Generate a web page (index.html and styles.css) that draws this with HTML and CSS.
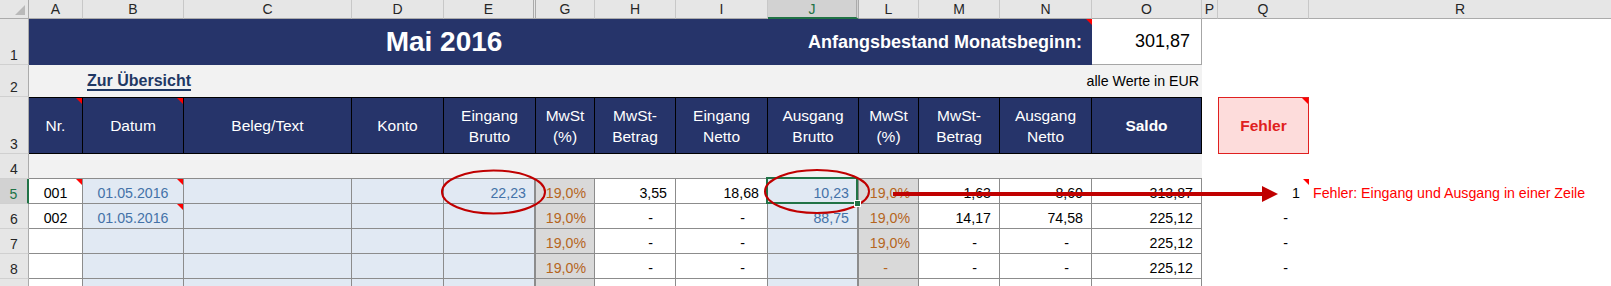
FILE: index.html
```html
<!DOCTYPE html>
<html lang="de">
<head>
<meta charset="utf-8">
<title>Mai 2016</title>
<link rel="stylesheet" href="styles.css">
</head>
<body>
<div class="sheet">
  <div class="grid">
    <!-- column headers -->
    <div class="ch corner"></div>
    <div class="ch">A</div>
    <div class="ch">B</div>
    <div class="ch">C</div>
    <div class="ch">D</div>
    <div class="ch hid">E</div>
    <div class="ch">G</div>
    <div class="ch">H</div>
    <div class="ch">I</div>
    <div class="ch hid sel">J</div>
    <div class="ch">L</div>
    <div class="ch">M</div>
    <div class="ch">N</div>
    <div class="ch">O</div>
    <div class="ch">P</div>
    <div class="ch">Q</div>
    <div class="ch last">R</div>

    <!-- row 1 -->
    <div class="rh">1</div>
    <div class="navy span3"></div>
    <div class="navy t-month">Mai 2016</div>
    <div class="navy t-label cm">Anfangsbestand Monatsbeginn:</div>
    <div class="start">301,87</div>
    <div class="blank span3"></div>

    <!-- row 2 -->
    <div class="rh">2</div>
    <div class="band"></div>
    <div class="band r2"><span class="link">Zur Übersicht</span><span class="unit">alle Werte in EUR</span></div>
    <div class="blank span3"></div>

    <!-- row 3 -->
    <div class="rh">3</div>
    <div class="h cm">Nr.</div>
    <div class="h cm">Datum</div>
    <div class="h">Beleg/Text</div>
    <div class="h">Konto</div>
    <div class="h">Eingang<br>Brutto</div>
    <div class="h">MwSt<br>(%)</div>
    <div class="h">MwSt-<br>Betrag</div>
    <div class="h">Eingang<br>Netto</div>
    <div class="h">Ausgang<br>Brutto</div>
    <div class="h">MwSt<br>(%)</div>
    <div class="h">MwSt-<br>Betrag</div>
    <div class="h">Ausgang<br>Netto</div>
    <div class="h b">Saldo</div>
    <div class="blank"></div>
    <div class="err cm">Fehler</div>
    <div class="blank"></div>

    <!-- row 4 -->
    <div class="rh">4</div>
    <div class="r4"></div>
    <div class="blank span3"></div>

    <!-- row 5 -->
    <div class="rh sel">5</div>
    <div class="d c cm">001</div>
    <div class="d c in cm">01.05.2016</div>
    <div class="d in"></div>
    <div class="d in"></div>
    <div class="d in dbl">22,23</div>
    <div class="d pct">19,0%</div>
    <div class="d">3,55</div>
    <div class="d">18,68</div>
    <div class="d in dbl cur">10,23<span class="handle"></span></div>
    <div class="d pct">19,0%</div>
    <div class="d">1,63</div>
    <div class="d">8,60</div>
    <div class="d">313,87</div>
    <div class="w"></div>
    <div class="w num cm">1</div>
    <div class="w msg">Fehler: Eingang und Ausgang in einer Zeile</div>

    <!-- row 6 -->
    <div class="rh">6</div>
    <div class="d c">002</div>
    <div class="d c in cm">01.05.2016</div>
    <div class="d in"></div>
    <div class="d in"></div>
    <div class="d in dbl"></div>
    <div class="d pct">19,0%</div>
    <div class="d dash">-</div>
    <div class="d dash">-</div>
    <div class="d in dbl">88,75</div>
    <div class="d pct">19,0%</div>
    <div class="d">14,17</div>
    <div class="d">74,58</div>
    <div class="d">225,12</div>
    <div class="w"></div>
    <div class="w num dash">-</div>
    <div class="w"></div>

    <!-- row 7 -->
    <div class="rh">7</div>
    <div class="d c"></div>
    <div class="d in"></div>
    <div class="d in"></div>
    <div class="d in"></div>
    <div class="d in dbl"></div>
    <div class="d pct">19,0%</div>
    <div class="d dash">-</div>
    <div class="d dash">-</div>
    <div class="d in dbl"></div>
    <div class="d pct">19,0%</div>
    <div class="d dash">-</div>
    <div class="d dash">-</div>
    <div class="d">225,12</div>
    <div class="w"></div>
    <div class="w num dash">-</div>
    <div class="w"></div>

    <!-- row 8 -->
    <div class="rh">8</div>
    <div class="d c"></div>
    <div class="d in"></div>
    <div class="d in"></div>
    <div class="d in"></div>
    <div class="d in dbl"></div>
    <div class="d pct">19,0%</div>
    <div class="d dash">-</div>
    <div class="d dash">-</div>
    <div class="d in dbl"></div>
    <div class="d pct dash2">-</div>
    <div class="d dash">-</div>
    <div class="d dash">-</div>
    <div class="d">225,12</div>
    <div class="w"></div>
    <div class="w num dash">-</div>
    <div class="w"></div>

    <!-- row 9 (only its top edge is visible) -->
    <div class="rh"></div>
    <div class="d c"></div>
    <div class="d in"></div>
    <div class="d in"></div>
    <div class="d in"></div>
    <div class="d in dbl"></div>
    <div class="d pct"></div>
    <div class="d"></div>
    <div class="d"></div>
    <div class="d in dbl"></div>
    <div class="d pct"></div>
    <div class="d"></div>
    <div class="d"></div>
    <div class="d"></div>
    <div class="w"></div>
    <div class="w"></div>
    <div class="w"></div>
  </div>

  <svg class="marks" width="1611" height="286" viewBox="0 0 1611 286" aria-hidden="true">
    <ellipse cx="493.5" cy="192" rx="51.5" ry="21.5" fill="none" stroke="#c00000" stroke-width="2"/>
    <ellipse cx="817" cy="191.5" rx="52" ry="21.5" fill="none" stroke="#c00000" stroke-width="2"/>
    <line x1="893" y1="194" x2="1264" y2="194" stroke="#c00000" stroke-width="4"/>
    <polygon points="1262,186 1278,194 1262,202" fill="#c00000"/>
  </svg>
</div>
</body>
</html>
```

FILE: styles.css
```css
* {
  box-sizing: border-box;
  margin: 0;
  padding: 0;
}

html,
body {
  width: 100%;
  height: 100%;
  overflow: hidden;
  background: #fff;
}

body {
  font-family: "Liberation Sans", Arial, sans-serif;
  color: #000;
}

.sheet {
  position: relative;
  width: 1611px;
  height: 286px;
  overflow: hidden;
}

.grid {
  display: grid;
  grid-template-columns: 29px 54px 101px 168px 92px 92px 59px 81px 92px 91px 60px 81px 92px 110px 16px 91px 302px;
  grid-template-rows: 19px 46px 32px 57px 25px 25px 25px 25px 25px 25px;
}

/* column headers */
.ch {
  background: #e6e6e6;
  border-right: 1px solid #c8c8c8;
  border-bottom: 1px solid #ababab;
  font-size: 14px;
  line-height: 1;
  color: #262626;
  display: flex;
  align-items: center;
  justify-content: center;
}

.ch.hid {
  border-right: 3px double #ababab;
}

.ch.sel {
  background: #d2d2d2;
  color: #217346;
  border-bottom: 2px solid #217346;
}

.ch.last {
  border-right: none;
}

.corner {
  position: relative;
  border-right-color: #ababab;
}

.corner::after {
  content: "";
  position: absolute;
  right: 3px;
  bottom: 3px;
  border-style: solid;
  border-width: 0 0 10px 10px;
  border-color: transparent transparent #b9b9b9 transparent;
}

/* row headers */
.rh {
  background: #e6e6e6;
  border-right: 1px solid #ababab;
  border-bottom: 1px solid #d0d0d0;
  font-size: 14px;
  line-height: 16px;
  color: #262626;
  display: flex;
  align-items: flex-end;
  justify-content: center;
  padding-bottom: 1px;
}

.rh.sel {
  background: #d2d2d2;
  color: #217346;
  border-right: 2px solid #217346;
}

/* generic */
.span3 {
  grid-column: span 3;
}

.blank {
  background: #fff;
}

.cm {
  position: relative;
}

.cm::before {
  content: "";
  position: absolute;
  top: 0;
  right: 0;
  border-style: solid;
  border-width: 0 6px 6px 0;
  border-color: transparent #ff0000 transparent transparent;
}

/* row 1 */
.navy {
  background: #26346a;
  color: #fff;
  font-weight: bold;
  display: flex;
  align-items: center;
  white-space: nowrap;
}

.t-month {
  grid-column: span 2;
  justify-content: center;
  font-size: 28px;
}

.t-label {
  grid-column: span 7;
  justify-content: flex-end;
  padding-right: 10px;
  font-size: 18px;
}

.start {
  border-right: 1px solid #a6a6a6;
  border-bottom: 1px solid #a6a6a6;
  font-size: 18px;
  display: flex;
  align-items: center;
  justify-content: flex-end;
  padding-right: 11px;
}

/* row 2 */
.band {
  background: #f2f2f2;
}

.r2 {
  grid-column: span 12;
  display: flex;
  align-items: center;
  justify-content: space-between;
  padding: 0 3px 0 4px;
  white-space: nowrap;
}

.link {
  font-size: 16px;
  font-weight: bold;
  color: #1f3864;
  text-decoration: underline;
  text-decoration-thickness: 2px;
  text-underline-offset: 3px;
}

.unit {
  font-size: 14.2px;
}

/* row 3 */
.h {
  background: #26346a;
  color: #fff;
  font-size: 15.5px;
  line-height: 21px;
  text-align: center;
  display: flex;
  align-items: center;
  justify-content: center;
  border-top: 1px solid #000;
  border-bottom: 1px solid #000;
  border-right: 1px solid #000;
}

.h.b {
  font-weight: bold;
}

.err {
  background: #fddcdb;
  border: 1px solid #e02020;
  color: #e02020;
  font-weight: bold;
  font-size: 15.5px;
  display: flex;
  align-items: center;
  justify-content: center;
}

/* row 4 */
.r4 {
  grid-column: span 13;
  background: #f2f2f2;
  border-bottom: 1px solid #8c8c8c;
}

/* data cells */
.d {
  position: relative;
  background: #fff;
  border-right: 1px solid #8c8c8c;
  border-bottom: 1px solid #8c8c8c;
  font-size: 14.2px;
  display: flex;
  align-items: center;
  justify-content: flex-end;
  padding: 3px 8px 0;
  white-space: nowrap;
}

.d.c {
  justify-content: center;
}

.d.in {
  background: #e1e9f3;
  color: #4472a8;
}

.d.pct {
  background: #d9d9d9;
  color: #b5651d;
}

.d.dbl {
  border-right-width: 2px;
}

.dash {
  padding-right: 22px;
}

.d.dash2 {
  padding-right: 30px;
}

.d.cur::after {
  content: "";
  position: absolute;
  left: -2px;
  top: -2px;
  right: -1px;
  bottom: -1px;
  border: 2px solid #217346;
}

.handle {
  position: absolute;
  right: -4px;
  bottom: -4px;
  width: 7px;
  height: 7px;
  background: #217346;
  border: 1px solid #fff;
  z-index: 2;
}

/* white area */
.w {
  position: relative;
  background: #fff;
  font-size: 14.2px;
  display: flex;
  align-items: center;
  padding-top: 3px;
  white-space: nowrap;
}

.w.num {
  justify-content: flex-end;
  padding-right: 9px;
}

.w.num.dash {
  padding-right: 21px;
}

.w.msg {
  color: #ff0000;
  padding-left: 4px;
}

/* overlay annotations */
.marks {
  position: absolute;
  left: 0;
  top: 0;
  pointer-events: none;
}
```
